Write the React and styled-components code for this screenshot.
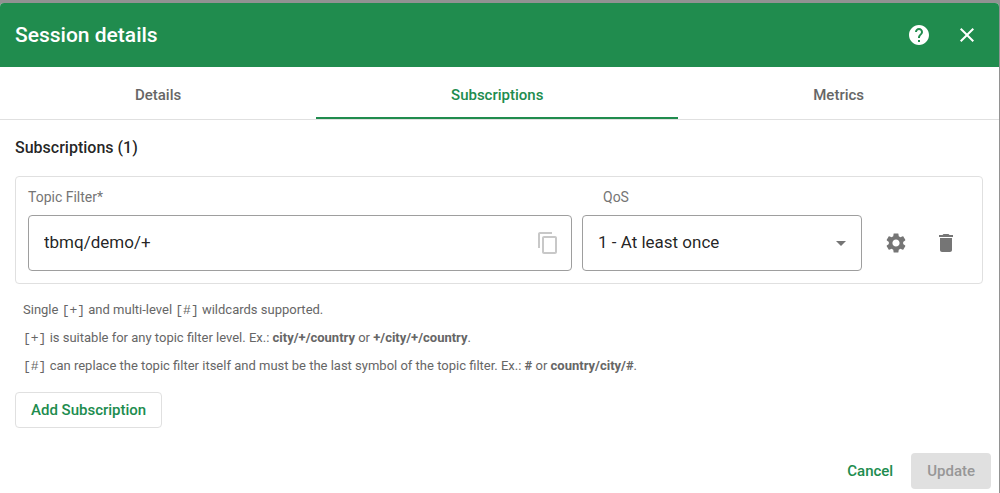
import React, { useState } from "react";
import styled, { createGlobalStyle, css } from "styled-components";

const GlobalStyle = createGlobalStyle`
  *, *::before, *::after { box-sizing: border-box; }
  body {
    margin: 0;
    background: #929292;
    color: rgba(0, 0, 0, 0.87);
    font-family: Roboto, "Liberation Sans", sans-serif;
    font-size: 16px;
  }
  button, input, select { font-family: inherit; }
`;

const Dialog = styled.main`
  display: flex;
  flex-direction: column;
  min-height: calc(100vh - 3px);
  margin: 3px 1px 0 0;
  background: #fff;
  border-radius: 4px 4px 0 0;
  overflow: hidden;
`;

const Toolbar = styled.header`
  display: flex;
  align-items: center;
  height: 64px;
  padding: 0 8px 0 15px;
  background: #208c4e;
  color: #fff;
`;

const Title = styled.h1`
  flex: 1;
  margin: 0;
  font-size: 21px;
  font-weight: 500;
  line-height: 32px;
`;

const IconButton = styled.button`
  display: grid;
  place-items: center;
  width: 48px;
  height: 48px;
  padding: 0;
  border: 0;
  background: none;
  color: inherit;
  cursor: pointer;
`;

const Icon = styled.svg`
  display: block;
  width: 24px;
  height: 24px;
  fill: currentColor;
`;

const Tabs = styled.nav`
  display: flex;
  border-bottom: 1px solid #e0e0e0;
`;

const Tab = styled.button`
  flex: 1 0 auto;
  height: 52px;
  padding: 6px 24px 0;
  border: 0;
  border-bottom: 2px solid ${(p) => (p.$active ? "#208c4e" : "transparent")};
  background: none;
  color: ${(p) => (p.$active ? "#208c4e" : "#666")};
  font-size: 15px;
  font-weight: 500;
  line-height: 20px;
  cursor: pointer;
`;

const Content = styled.section`
  flex: 1;
  padding: 16px 16px 0 15px;
`;

const Heading = styled.h2`
  margin: 0 0 16px;
  font-size: 16px;
  font-weight: 500;
  line-height: 24px;
`;

const SubscriptionRow = styled.div`
  display: flex;
  align-items: flex-end;
  gap: 10px;
  padding: 10px 12px 12px;
  border: 1px solid #e0e0e0;
  border-radius: 4px;
`;

const Field = styled.div`
  ${(p) => (p.$wide ? css`flex: 1; min-width: 0;` : css`flex: 0 0 280px;`)}
`;

const Label = styled.label`
  display: block;
  margin-bottom: 8px;
  padding-left: ${(p) => (p.$indent ? "21px" : "0")};
  color: #757575;
  font-size: 14px;
  line-height: 20px;
`;

const Outline = styled.div`
  display: flex;
  align-items: center;
  position: relative;
  height: 56px;
  border: 1px solid #9e9e9e;
  border-radius: 4px;
`;

const controlText = css`
  width: 100%;
  height: 100%;
  padding: 0 15px 2px;
  border: 0;
  outline: 0;
  background: none;
  color: rgba(0, 0, 0, 0.87);
  font-size: 17px;
`;

const TextInput = styled.input`
  ${controlText}
`;

const Select = styled.select`
  ${controlText}
  appearance: none;
`;

const Arrow = styled(Icon)`
  position: absolute;
  right: 8px;
  color: #757575;
  pointer-events: none;
`;

const CopyButton = styled(IconButton)`
  flex: none;
  width: 46px;
  color: #c8c8c8;
`;

const Actions = styled.div`
  display: flex;
  gap: 2px;
  padding-bottom: 4px;
  color: #757575;
`;

const Hints = styled.div`
  padding: 12px 8px;
  color: #666;
  font-size: 13px;
  line-height: 28px;

  p { margin: 0; }
  code { font-family: "Liberation Mono", monospace; font-size: 13px; line-height: 1; }
  b { font-weight: 700; }
`;

const buttonBase = css`
  height: 36px;
  border-radius: 4px;
  font-size: 15px;
  font-weight: 500;
  line-height: 20px;
`;

const OutlinedButton = styled.button`
  ${buttonBase}
  padding: 0 15px;
  border: 1px solid #e0e0e0;
  background: #fff;
  color: #208c4e;
  cursor: pointer;
`;

const TextButton = styled.button`
  ${buttonBase}
  padding: 0 12px;
  border: 0;
  background: none;
  color: #208c4e;
  cursor: pointer;
`;

const FilledButton = styled.button`
  ${buttonBase}
  padding: 0 16px;
  border: 0;
  background: #e0e0e0;
  color: #979797;
`;

const Footer = styled.footer`
  display: flex;
  justify-content: flex-end;
  gap: 6px;
  padding: 8px 8px 4px;
`;

const paths = {
  help: "M12 2C6.48 2 2 6.48 2 12s4.48 10 10 10 10-4.48 10-10S17.52 2 12 2zm1 17h-2v-2h2v2zm2.07-7.75l-.9.92C13.45 12.9 13 13.5 13 15h-2v-.5c0-1.1.45-2.1 1.17-2.83l1.24-1.26c.37-.36.59-.86.59-1.41 0-1.1-.9-2-2-2s-2 .9-2 2H8c0-2.21 1.79-4 4-4s4 1.79 4 4c0 .88-.36 1.68-.93 2.25z",
  close: "M19 6.41L17.59 5 12 10.59 6.41 5 5 6.41 10.59 12 5 17.59 6.41 19 12 13.41 17.59 19 19 17.59 13.41 12z",
  copy: "M16 1H4c-1.1 0-2 .9-2 2v14h2V3h12V1zm3 4H8c-1.1 0-2 .9-2 2v14c0 1.1.9 2 2 2h11c1.1 0 2-.9 2-2V7c0-1.1-.9-2-2-2zm0 16H8V7h11v14z",
  arrow: "M7 10l5 5 5-5z",
  settings: "M19.14 12.94c.04-.3.06-.61.06-.94 0-.32-.02-.64-.07-.94l2.03-1.58c.18-.14.23-.41.12-.61l-1.92-3.32c-.12-.22-.37-.29-.59-.22l-2.39.96c-.5-.38-1.03-.7-1.62-.94l-.36-2.54c-.04-.24-.24-.41-.48-.41h-3.84c-.24 0-.43.17-.47.41l-.36 2.54c-.59.24-1.13.57-1.62.94l-2.39-.96c-.22-.08-.47 0-.59.22L2.74 8.87c-.12.21-.08.47.12.61l2.03 1.58c-.05.3-.09.63-.09.94s.02.64.07.94l-2.03 1.58c-.18.14-.23.41-.12.61l1.92 3.32c.12.22.37.29.59.22l2.39-.96c.5.38 1.03.7 1.62.94l.36 2.54c.05.24.24.41.48.41h3.84c.24 0 .44-.17.47-.41l.36-2.54c.59-.24 1.13-.56 1.62-.94l2.39.96c.22.08.47 0 .59-.22l1.92-3.32c.12-.22.07-.47-.12-.61l-2.01-1.58zM12 15.6c-1.98 0-3.6-1.62-3.6-3.6s1.62-3.6 3.6-3.6 3.6 1.62 3.6 3.6-1.62 3.6-3.6 3.6z",
  trash: "M6 19c0 1.1.9 2 2 2h8c1.1 0 2-.9 2-2V7H6v12zM19 4h-3.5l-1-1h-5l-1 1H5v2h14V4z",
};

function Glyph({ name }) {
  return (
    <Icon viewBox="0 0 24 24" aria-hidden="true">
      <path d={paths[name]} />
    </Icon>
  );
}

export default function App() {
  const [tab, setTab] = useState("Subscriptions");
  const [topic, setTopic] = useState("tbmq/demo/+");
  const [qos, setQos] = useState("1");

  return (
    <>
      <GlobalStyle />
      <Dialog>
        <Toolbar>
          <Title>Session details</Title>
          <IconButton aria-label="Help"><Glyph name="help" /></IconButton>
          <IconButton aria-label="Close"><Glyph name="close" /></IconButton>
        </Toolbar>
        <Tabs>
          {["Details", "Subscriptions", "Metrics"].map((name) => (
            <Tab key={name} $active={tab === name} onClick={() => setTab(name)}>
              {name}
            </Tab>
          ))}
        </Tabs>
        <Content>
          <Heading>Subscriptions (1)</Heading>
          <SubscriptionRow>
            <Field $wide>
              <Label htmlFor="topic">Topic Filter*</Label>
              <Outline>
                <TextInput id="topic" value={topic} onChange={(e) => setTopic(e.target.value)} />
                <CopyButton aria-label="Copy topic filter"><Glyph name="copy" /></CopyButton>
              </Outline>
            </Field>
            <Field>
              <Label htmlFor="qos" $indent>QoS</Label>
              <Outline>
                <Select id="qos" value={qos} onChange={(e) => setQos(e.target.value)}>
                  <option value="0">0 - At most once</option>
                  <option value="1">1 - At least once</option>
                  <option value="2">2 - Exactly once</option>
                </Select>
                <Arrow viewBox="0 0 24 24" aria-hidden="true">
                  <path d={paths.arrow} />
                </Arrow>
              </Outline>
            </Field>
            <Actions>
              <IconButton aria-label="Subscription options"><Glyph name="settings" /></IconButton>
              <IconButton aria-label="Remove subscription"><Glyph name="trash" /></IconButton>
            </Actions>
          </SubscriptionRow>
          <Hints>
            <p>Single <code>[+]</code> and multi-level <code>[#]</code> wildcards supported.</p>
            <p><code>[+]</code> is suitable for any topic filter level. Ex.: <b>city/+/country</b> or <b>+/city/+/country</b>.</p>
            <p><code>[#]</code> can replace the topic filter itself and must be the last symbol of the topic filter. Ex.: <b>#</b> or <b>country/city/#</b>.</p>
          </Hints>
          <OutlinedButton>Add Subscription</OutlinedButton>
        </Content>
        <Footer>
          <TextButton>Cancel</TextButton>
          <FilledButton disabled>Update</FilledButton>
        </Footer>
      </Dialog>
    </>
  );
}
